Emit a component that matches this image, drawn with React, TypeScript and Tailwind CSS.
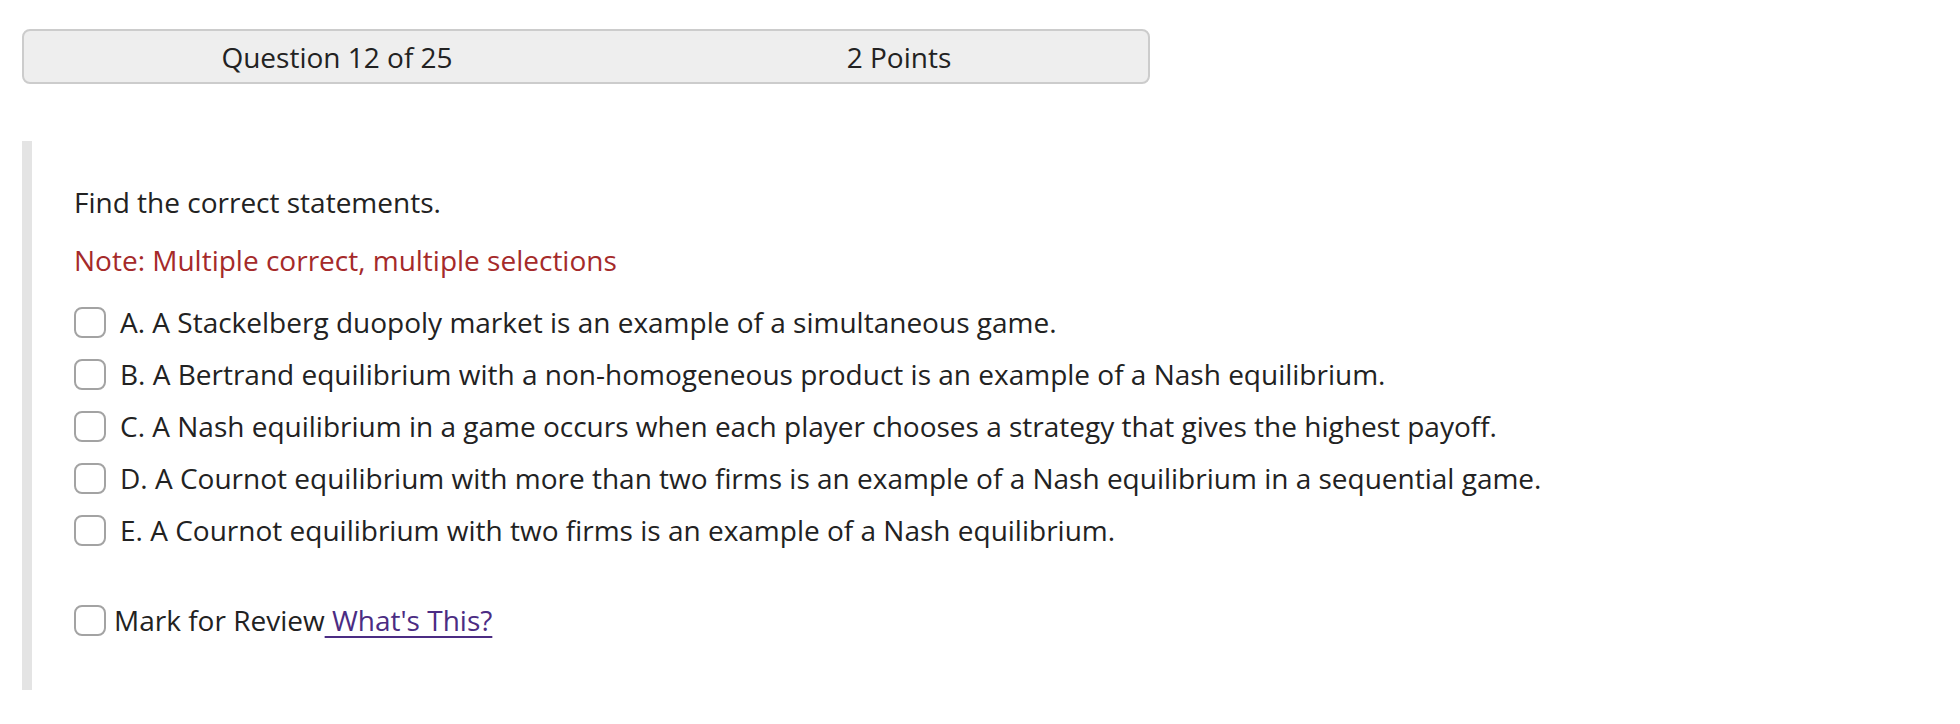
import React from "react";

const options = [
  "A. A Stackelberg duopoly market is an example of a simultaneous game.",
  "B. A Bertrand equilibrium with a non-homogeneous product is an example of a Nash equilibrium.",
  "C. A Nash equilibrium in a game occurs when each player chooses a strategy that gives the highest payoff.",
  "D. A Cournot equilibrium with more than two firms is an example of a Nash equilibrium in a sequential game.",
  "E. A Cournot equilibrium with two firms is an example of a Nash equilibrium.",
];

function Box() {
  return <span className="block w-[32px] h-[31px] shrink-0 rounded-[8px] border-2 border-[#a3a3a3] bg-white" />;
}

export default function App() {
  return (
    <div className="min-h-[724px] bg-white pt-[29px] pl-[22px] text-[28px] leading-[40px] text-[#222222] [font-family:'Open_Sans',sans-serif]">
      <div className="grid h-[55px] w-[1128px] grid-cols-[626px_1fr] items-center rounded-[8px] border-2 border-[#cccccc] bg-[#eeeeee]">
        <div className="text-center">Question 12 of 25</div>
        <div className="text-center">2 Points</div>
      </div>
      <div className="mt-[57px] h-[549px] border-l-[10px] border-[#e4e4e4] pl-[42px] pt-[41px]">
        <div>Find the correct statements.</div>
        <div className="mt-[18px] text-[#a52a2a]">Note: Multiple correct, multiple selections</div>
        <div className="mt-[22px] flex flex-col gap-[12px]">
          {options.map((o) => (
            <div key={o} className="flex h-[40px] items-center gap-[14px]">
              <Box />
              <span className="whitespace-nowrap">{o}</span>
            </div>
          ))}
        </div>
        <div className="mt-[50px] flex h-[40px] items-center gap-[8px]">
          <Box />
          <span className="whitespace-nowrap">
            Mark for Review
            <a className="text-[#4b2c83] underline decoration-[2px] underline-offset-[5px]"> What's This?</a>
          </span>
        </div>
      </div>
    </div>
  );
}
